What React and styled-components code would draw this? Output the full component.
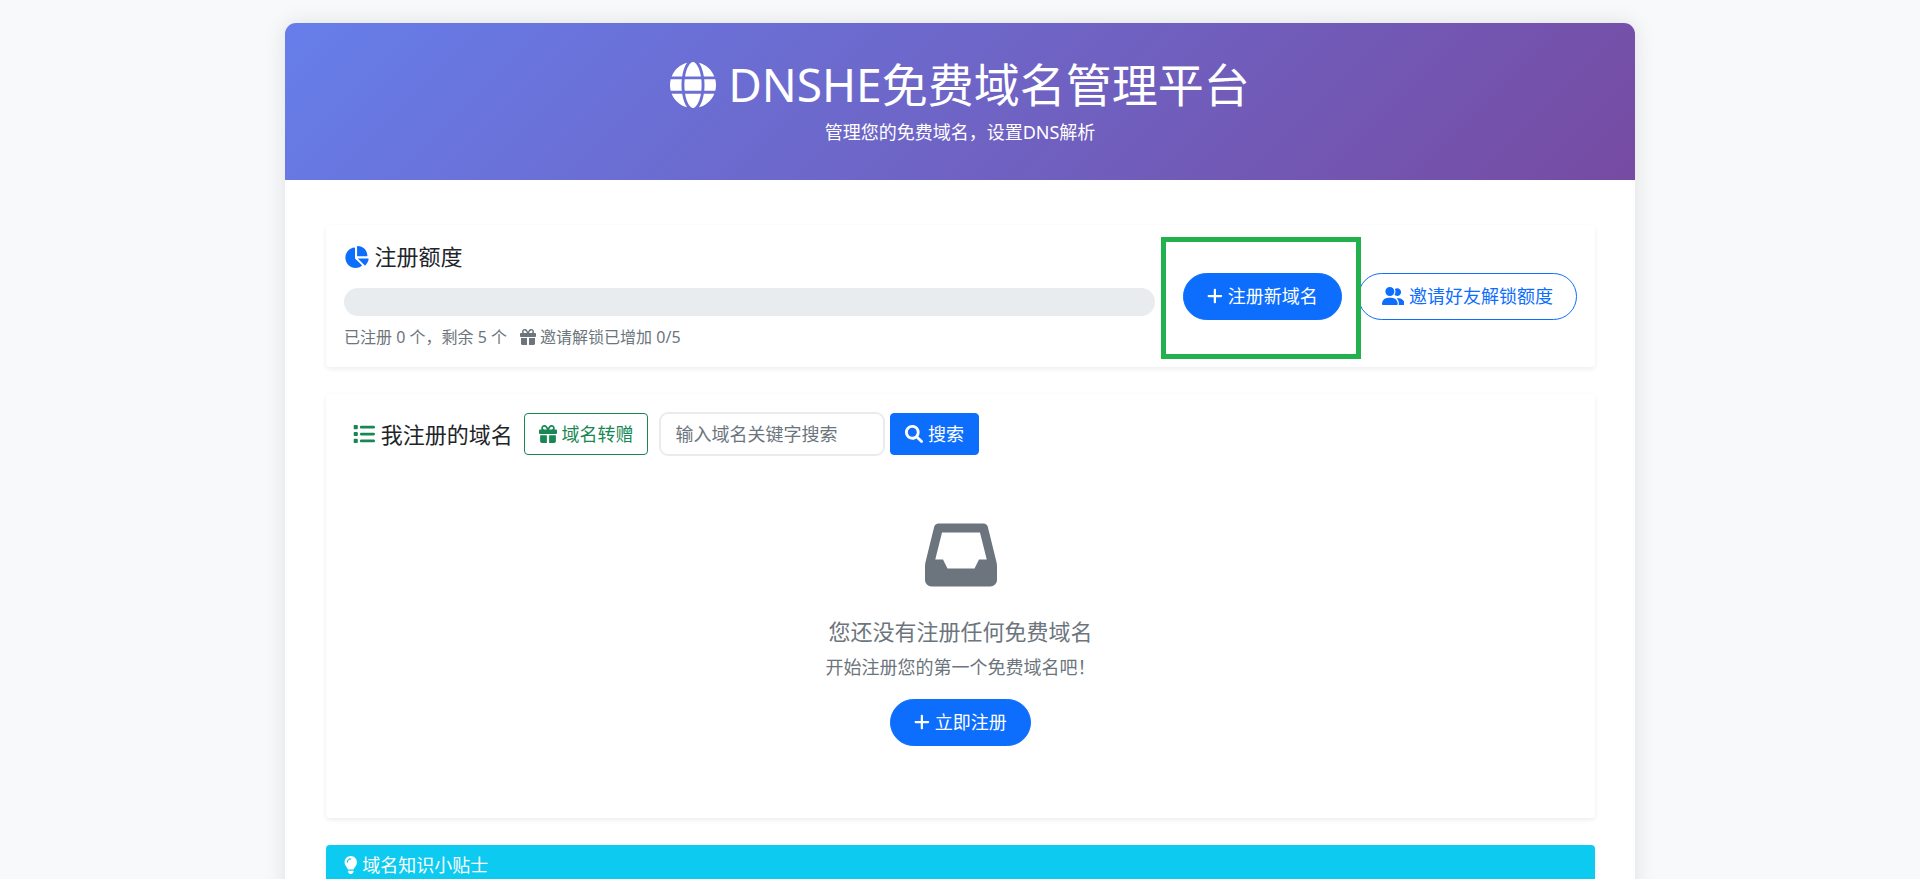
import React, { useState } from "react";
import styled, { createGlobalStyle } from "styled-components";
import {
  FaChartPie,
  FaGift,
  FaGlobe,
  FaLightbulb,
  FaList,
  FaPlus,
  FaUserGroup,
} from "react-icons/fa6";

const GlobalStyle = createGlobalStyle`
  * {
    box-sizing: border-box;
  }
  body {
    margin: 0;
    background-color: #f8f9fb;
    color: #212529;
    font-family: "Noto Sans", "Noto Sans CJK SC", sans-serif;
    font-size: 18px;
    line-height: 27px;
  }
  h1, h2, h3, p {
    margin: 0;
    font-weight: 400;
  }
  button, input {
    font: inherit;
  }
  svg {
    width: auto;
    height: 1em;
    vertical-align: -0.125em;
  }
`;

// react-icons draws every icon in a square, these ones are not square
const PlusIcon = styled(FaPlus)`
  aspect-ratio: 448 / 512;
`;

const PieIcon = styled(FaChartPie)`
  aspect-ratio: 576 / 512;
`;

const UsersIcon = styled(FaUserGroup)`
  aspect-ratio: 640 / 512;
`;

const BulbIcon = styled(FaLightbulb)`
  aspect-ratio: 384 / 512;
`;

const SearchIcon = () => (
  <svg viewBox="0 0 512 512" fill="currentColor">
    <path d="M500.3 443.7l-119.7-119.7c27.22-40.41 40.65-90.9 33.46-144.7C401.8 87.79 326.8 13.32 235.2 1.723C99.01-15.51-15.51 99.01 1.724 235.2c11.6 91.64 86.08 166.7 177.6 178.9c53.8 7.189 104.3-6.236 144.7-33.46l119.7 119.7c15.62 15.62 40.95 15.62 56.57 0C515.9 484.7 515.9 459.3 500.3 443.7zM80 208c0-70.58 57.42-128 128-128s128 57.42 128 128c0 70.58-57.42 128-128 128S80 278.6 80 208z" />
  </svg>
);

const InboxIcon = () => (
  <svg viewBox="0 0 512 512" fill="currentColor">
    <path d="M447 56.25C443.5 42 430.7 32 416 32H96c-14.69 0-27.47 10-31.03 24.25L3.715 304.9C1.247 314.9 0 325.2 0 335.5V432c0 26.51 21.49 48 48 48h416c26.51 0 48-21.49 48-48v-96.5c0-10.32-1.247-20.6-3.715-30.61L447 56.25zM352 352H160L128 288H73L121 96h270L439 288H384L352 352z" />
  </svg>
);

const Container = styled.div`
  max-width: 1350px;
  margin: 23px auto;
  background-color: white;
  border-radius: 11px;
  box-shadow: 0 0 22px rgba(0, 0, 0, 0.1);
  overflow: hidden;
`;

const Header = styled.header`
  padding: 34px;
  text-align: center;
  color: white;
  background: linear-gradient(135deg, #667eea 0%, #764ba2 100%);
`;

const Title = styled.h1`
  margin-bottom: 8px;
  font-size: 46px;
  line-height: 54px;
`;

const Subtitle = styled.p``;

const Content = styled.main`
  display: flex;
  flex-direction: column;
  gap: 27px;
  padding: 45px 40px 45px 41px;
`;

const Card = styled.section`
  padding: 18px;
  background-color: white;
  border-radius: 4px;
  box-shadow: 0 2px 5px rgba(0, 0, 0, 0.075);
`;

const CardTitle = styled.h2`
  font-size: 22px;
  line-height: 27px;

  svg {
    color: ${(props) => props.$icon};
  }
`;

const QuotaRow = styled.div`
  display: flex;
  align-items: center;
  gap: 28px;
`;

const Quota = styled.div`
  flex: 1;
`;

const Progress = styled.div`
  height: 28px;
  margin: 18px 0 9px;
  border-radius: 14px;
  background-color: #e9ecef;
  overflow: hidden;
`;

const ProgressBar = styled.div`
  height: 100%;
  background-color: #0d6efd;
`;

const QuotaText = styled.div`
  display: flex;
  gap: 13px;
  color: #6c757d;
  font-size: 16px;
  line-height: 24px;
`;

const Actions = styled.div`
  display: flex;
  gap: 16px;
`;

const Highlight = styled.div`
  position: relative;

  &::after {
    content: "";
    position: absolute;
    inset: -36px -19px -39px -22px;
    z-index: 1;
    border: 5px solid #22b14c;
    pointer-events: none;
  }
`;

const Button = styled.button`
  padding: 9px 23px;
  border: 1px solid #0d6efd;
  border-radius: 28px;
  white-space: nowrap;
  cursor: pointer;
  color: ${(props) => (props.$outline ? "#0d6efd" : "white")};
  background-color: ${(props) => (props.$outline ? "transparent" : "#0d6efd")};
`;

const ToolButton = styled(Button)`
  padding: 7px 14px;
  line-height: 26px;
  border-radius: 4px;
`;

const GiftButton = styled(ToolButton)`
  color: #198754;
  border-color: #198754;
`;

const ListHeader = styled.div`
  display: flex;
  align-items: center;
  gap: 11px;
  padding: 0 9px;
`;

const SearchForm = styled.form`
  display: flex;
  align-items: center;
  gap: 5px;
`;

const SearchInput = styled.input`
  width: 226px;
  height: 44px;
  padding: 0 14px;
  border: 2px solid #e9ecef;
  border-radius: 9px;
  color: #212529;

  &::placeholder {
    color: #6c757d;
    opacity: 1;
  }
`;

const Empty = styled.div`
  display: flex;
  flex-direction: column;
  align-items: center;
  padding: 63px 0 54px;
  color: #6c757d;
`;

const EmptyIcon = styled.div`
  margin-bottom: 27px;
  font-size: 72px;
  line-height: 72px;

  svg {
    display: block;
  }
`;

const EmptyTitle = styled.h3`
  margin-bottom: 9px;
  font-size: 22px;
  line-height: 27px;
`;

const EmptyText = styled.p`
  margin-bottom: 18px;
`;

const TipsCard = styled.section`
  border-radius: 4px;
  box-shadow: 0 2px 5px rgba(0, 0, 0, 0.075);
  overflow: hidden;
`;

const TipsTitle = styled.h2`
  padding: 9px 18px;
  font-size: 18px;
  line-height: 22px;
  color: white;
  background-color: #0dcaf0;
`;

const App = () => {
  const [keyword, setKeyword] = useState("");
  const used = 0;
  const total = 5;

  return (
    <>
      <GlobalStyle />
      <Container>
        <Header>
          <Title>
            <FaGlobe /> DNSHE免费域名管理平台
          </Title>
          <Subtitle>管理您的免费域名，设置DNS解析</Subtitle>
        </Header>

        <Content>
          <Card>
            <QuotaRow>
              <Quota>
                <CardTitle $icon="#0d6efd" id="quota">
                  <PieIcon /> 注册额度
                </CardTitle>
                <Progress
                  role="progressbar"
                  aria-labelledby="quota"
                  aria-valuenow={used}
                  aria-valuemin={0}
                  aria-valuemax={total}
                >
                  <ProgressBar style={{ width: `${(used / total) * 100}%` }} />
                </Progress>
                <QuotaText>
                  <span>{`已注册 ${used} 个，剩余 ${total - used} 个`}</span>
                  <span>
                    <FaGift /> 邀请解锁已增加 0/5
                  </span>
                </QuotaText>
              </Quota>
              <Actions>
                <Highlight>
                  <Button type="button">
                    <PlusIcon /> 注册新域名
                  </Button>
                </Highlight>
                <Button type="button" $outline>
                  <UsersIcon /> 邀请好友解锁额度
                </Button>
              </Actions>
            </QuotaRow>
          </Card>

          <Card>
            <ListHeader>
              <CardTitle $icon="#198754">
                <FaList /> 我注册的域名
              </CardTitle>
              <GiftButton type="button" $outline>
                <FaGift /> 域名转赠
              </GiftButton>
              <SearchForm onSubmit={(e) => e.preventDefault()}>
                <SearchInput
                  type="text"
                  placeholder="输入域名关键字搜索"
                  aria-label="输入域名关键字搜索"
                  value={keyword}
                  onChange={(e) => setKeyword(e.target.value)}
                />
                <ToolButton type="submit">
                  <SearchIcon /> 搜索
                </ToolButton>
              </SearchForm>
            </ListHeader>
            <Empty>
              <EmptyIcon>
                <InboxIcon />
              </EmptyIcon>
              <EmptyTitle>您还没有注册任何免费域名</EmptyTitle>
              <EmptyText>开始注册您的第一个免费域名吧！</EmptyText>
              <Button type="button">
                <PlusIcon /> 立即注册
              </Button>
            </Empty>
          </Card>

          <TipsCard>
            <TipsTitle>
              <BulbIcon /> 域名知识小贴士
            </TipsTitle>
          </TipsCard>
        </Content>
      </Container>
    </>
  );
};

export default App;
